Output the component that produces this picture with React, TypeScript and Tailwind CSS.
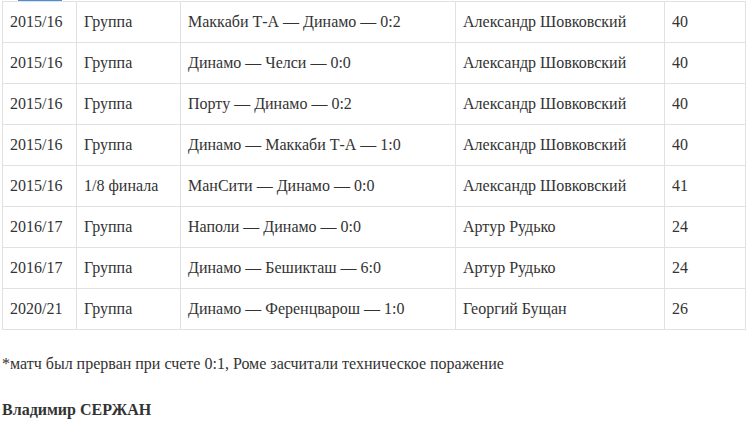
import React from "react";

const rows = [
  ["2015/16", "Группа", "Маккаби Т-А — Динамо — 0:2", "Александр Шовковский", "40"],
  ["2015/16", "Группа", "Динамо — Челси — 0:0", "Александр Шовковский", "40"],
  ["2015/16", "Группа", "Порту — Динамо — 0:2", "Александр Шовковский", "40"],
  ["2015/16", "Группа", "Динамо — Маккаби Т-А — 1:0", "Александр Шовковский", "40"],
  ["2015/16", "1/8 финала", "МанСити — Динамо — 0:0", "Александр Шовковский", "41"],
  ["2016/17", "Группа", "Наполи — Динамо — 0:0", "Артур Рудько", "24"],
  ["2016/17", "Группа", "Динамо — Бешикташ — 6:0", "Артур Рудько", "24"],
  ["2020/21", "Группа", "Динамо — Ференцварош — 1:0", "Георгий Бущан", "26"],
];

const widths = ["w-[74px]", "w-[104px]", "w-[275px]", "w-[209px]", "w-[81px]"];

export default function App() {
  return (
    <div className="bg-white w-[750px] h-[428px] overflow-hidden text-[#333] font-[family-name:Liberation_Serif,serif] text-[16px]">
      <div className="h-px relative">
        <div className="absolute left-[18px] top-0 w-[44px] h-px bg-[#4a90d9]" />
      </div>
      <table className="ml-[2px] border-collapse table-fixed w-[743px]">
        <tbody>
          {rows.map((r, i) => (
            <tr key={i} className="h-[41px]">
              {r.map((c, j) => (
                <td
                  key={j}
                  className={`${widths[j]} border border-[#e1e1e1] px-[7px] py-0 align-middle leading-[20px]`}
                >
                  {c}
                </td>
              ))}
            </tr>
          ))}
        </tbody>
      </table>
      <p className="mt-[24px] ml-[2px] leading-[20px]">
        *матч был прерван при счете 0:1, Роме засчитали техническое поражение
      </p>
      <p className="mt-[26px] ml-[2px] leading-[20px] font-bold">Владимир СЕРЖАН</p>
    </div>
  );
}
